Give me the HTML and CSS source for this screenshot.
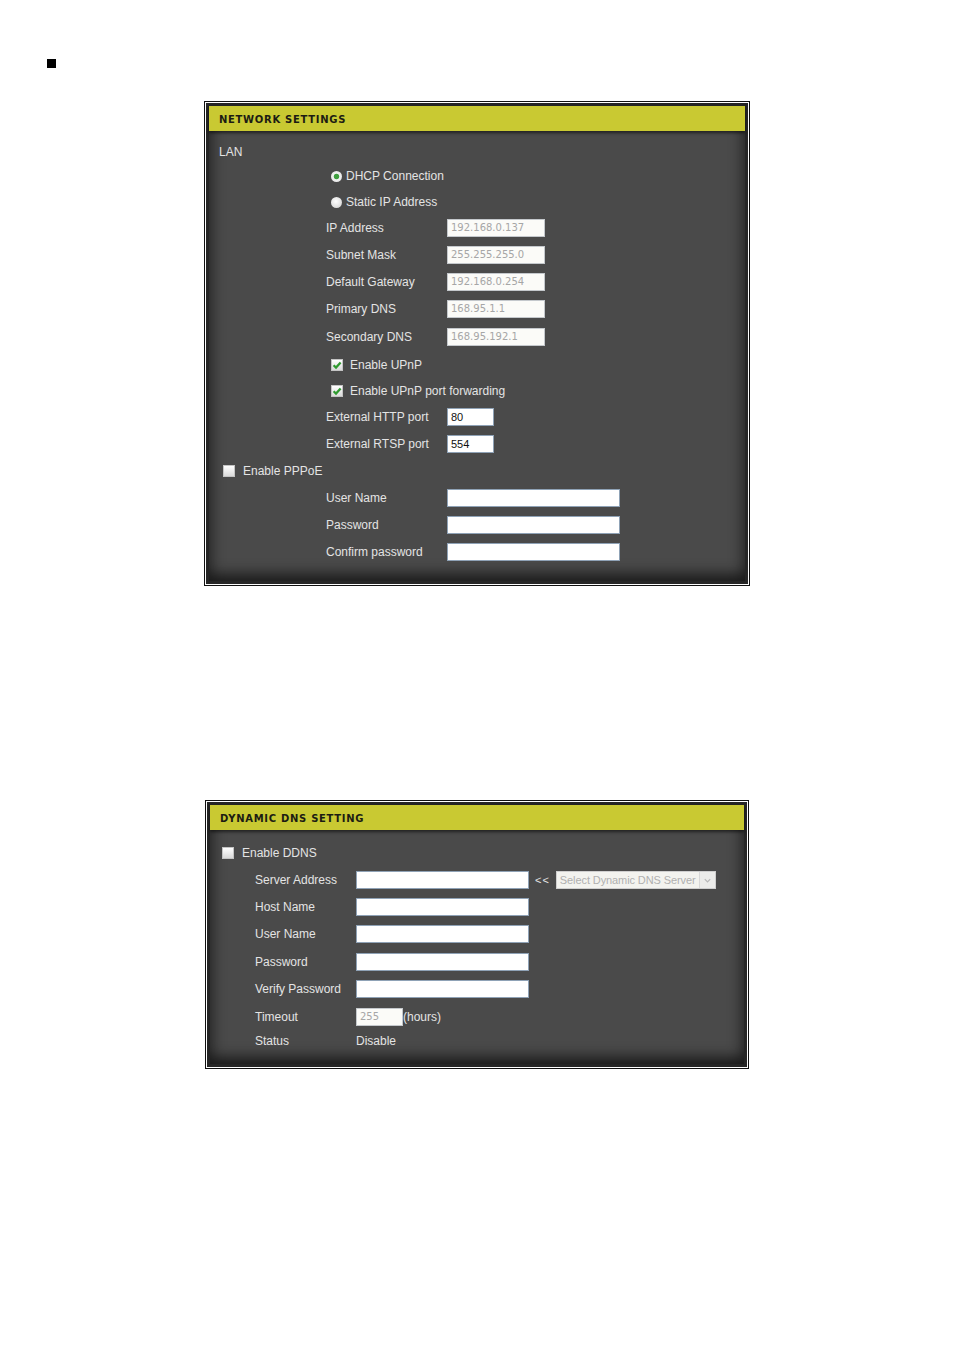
FILE: index.html
```html
<!DOCTYPE html>
<html>
<head>
<meta charset="utf-8">
<link rel="stylesheet" href="styles.css">
</head>
<body>
<div class="bullet"></div>

<div class="frame frame-net">
  <div class="panel">
    <div class="header">NETWORK SETTINGS</div>
    <div class="body body-net">
      <div class="row h22 pad-sec"><span class="txt">LAN</span></div>
      <div class="row h26 pad-opt"><span class="radio on"></span><span class="txt gap4">DHCP Connection</span></div>
      <div class="row h26 pad-opt"><span class="radio"></span><span class="txt gap4">Static IP Address</span></div>
      <div class="row h26 pad-lbl"><span class="lbl w121">IP Address</span><span class="inp ip dis">192.168.0.137</span></div>
      <div class="row h28 pad-lbl"><span class="lbl w121">Subnet Mask</span><span class="inp ip dis">255.255.255.0</span></div>
      <div class="row h26 pad-lbl"><span class="lbl w121">Default Gateway</span><span class="inp ip dis">192.168.0.254</span></div>
      <div class="row h28 pad-lbl"><span class="lbl w121">Primary DNS</span><span class="inp ip dis">168.95.1.1</span></div>
      <div class="row h28 pad-lbl"><span class="lbl w121">Secondary DNS</span><span class="inp ip dis">168.95.192.1</span></div>
      <div class="row h28 pad-opt"><span class="chk on"><svg viewBox="0 0 12 12" width="12" height="12"><path d="M2.6 6.2 L5 8.6 L9.6 3.4" fill="none" stroke="#2f9a2f" stroke-width="2.2"/></svg></span><span class="txt gap7">Enable UPnP</span></div>
      <div class="row h24 pad-opt"><span class="chk on"><svg viewBox="0 0 12 12" width="12" height="12"><path d="M2.6 6.2 L5 8.6 L9.6 3.4" fill="none" stroke="#2f9a2f" stroke-width="2.2"/></svg></span><span class="txt gap7">Enable UPnP port forwarding</span></div>
      <div class="row h28 pad-lbl"><span class="lbl w121">External HTTP port</span><span class="inp port">80</span></div>
      <div class="row h26 pad-lbl"><span class="lbl w121">External RTSP port</span><span class="inp port">554</span></div>
      <div class="row h28 pad-chk1"><span class="chk"></span><span class="txt gap8">Enable PPPoE</span></div>
      <div class="row h26 pad-lbl"><span class="lbl w121">User Name</span><span class="inp long"></span></div>
      <div class="row h28 pad-lbl"><span class="lbl w121">Password</span><span class="inp long"></span></div>
      <div class="row h26 pad-lbl"><span class="lbl w121">Confirm password</span><span class="inp long"></span></div>
    </div>
  </div>
</div>

<div class="frame frame-ddns">
  <div class="panel">
    <div class="header">DYNAMIC DNS SETTING</div>
    <div class="body body-ddns">
      <div class="row h26 pad-chk2"><span class="chk"></span><span class="txt gap8">Enable DDNS</span></div>
      <div class="row h28 pad-lbl2"><span class="lbl w101">Server Address</span><span class="inp long"></span><span class="txt arrows">&lt;&lt;</span><span class="select"><span class="sel-txt">Select Dynamic DNS Server</span><span class="sel-btn"><svg viewBox="0 0 10 10" width="9" height="9"><path d="M2 3.5 L5 6.5 L8 3.5" fill="none" stroke="#b8b8b8" stroke-width="1.4"/></svg></span></span></div>
      <div class="row h26 pad-lbl2"><span class="lbl w101">Host Name</span><span class="inp long"></span></div>
      <div class="row h28 pad-lbl2"><span class="lbl w101">User Name</span><span class="inp long"></span></div>
      <div class="row h28 pad-lbl2"><span class="lbl w101">Password</span><span class="inp long"></span></div>
      <div class="row h26 pad-lbl2"><span class="lbl w101">Verify Password</span><span class="inp long"></span></div>
      <div class="row h30 pad-lbl2"><span class="lbl w101">Timeout</span><span class="inp port dis">255</span><span class="txt">(hours)</span></div>
      <div class="row h18 pad-lbl2"><span class="lbl w101">Status</span><span class="txt">Disable</span></div>
    </div>
  </div>
</div>
</body>
</html>
```

FILE: styles.css
```css
html, body {
  margin: 0;
  padding: 0;
  background: #ffffff;
}

body {
  width: 954px;
  height: 1350px;
  font-family: "Liberation Sans", Arial, sans-serif;
  padding-top: 59px;
  box-sizing: border-box;
}

.bullet {
  width: 9px;
  height: 9px;
  background: #000;
  margin-left: 47px;
}

.frame {
  border: 1px solid #111;
  padding: 1px;
  background: #fff;
  width: 542px;
}

.frame-net {
  margin-left: 204px;
  margin-top: 33px;
}

.frame-ddns {
  margin-left: 205px;
  margin-top: 214px;
  width: 540px;
}

.panel {
  border: 3px solid #262626;
  background: #4a4a4a;
  box-shadow: inset 0 0 14px 3px rgba(0, 0, 0, 0.45), inset 0 -14px 14px -6px rgba(0, 0, 0, 0.4);
}

.header {
  height: 25px;
  background: #c9c932;
  box-shadow: 0 2px 3px rgba(0, 0, 0, 0.55);
  color: #1c1c12;
  font-family: "DejaVu Sans", Verdana, sans-serif;
  font-weight: bold;
  font-size: 10px;
  letter-spacing: 0.7px;
  line-height: 27px;
  padding-left: 10px;
}

.body-net {
  padding-top: 10px;
  padding-bottom: 16px;
}

.body-ddns {
  padding-top: 10px;
  padding-bottom: 14px;
}

.row {
  display: flex;
  align-items: center;
  box-sizing: border-box;
}

.h18 { height: 18px; }
.h22 { height: 22px; }
.h24 { height: 24px; }
.h26 { height: 26px; }
.h28 { height: 28px; }
.h30 { height: 30px; }

.pad-sec { padding-left: 10px; }
.pad-opt { padding-left: 122px; }
.pad-lbl { padding-left: 117px; }
.pad-chk1 { padding-left: 14px; }
.pad-chk2 { padding-left: 12px; }
.pad-lbl2 { padding-left: 45px; }

.txt, .lbl {
  color: #e4e4e4;
  font-size: 12px;
  white-space: nowrap;
}

.w121 { width: 121px; flex: none; }
.w101 { width: 101px; flex: none; }

.gap4 { margin-left: 4px; }
.gap7 { margin-left: 7px; }
.gap8 { margin-left: 8px; }

.radio {
  width: 11px;
  height: 11px;
  border-radius: 50%;
  background: radial-gradient(circle at 45% 40%, #ffffff 0, #e2e2e2 60%, #c8c8c8 100%);
  flex: none;
}

.radio.on {
  background: radial-gradient(circle, #3f9f3f 0, #3f9f3f 2.3px, #f2f2f2 3.2px, #dcdcdc 100%);
}

.chk {
  width: 12px;
  height: 12px;
  box-sizing: border-box;
  background: linear-gradient(#ffffff, #dadada);
  border: 1px solid #c4c4c4;
  flex: none;
  position: relative;
}

.chk svg {
  position: absolute;
  left: -1px;
  top: -1px;
}

.inp {
  box-sizing: border-box;
  height: 18px;
  background: #ffffff;
  border: 1px solid #8fa2b6;
  font-size: 11px;
  line-height: 16px;
  padding-left: 3px;
  color: #111;
  flex: none;
  white-space: nowrap;
  overflow: hidden;
}

.inp.dis {
  background: #fbfbf8;
  color: #a6a6a6;
  font-family: "DejaVu Sans", Verdana, sans-serif;
  font-size: 10px;
  border-color: #c4c8cc;
}

.ip { width: 98px; }
.port { width: 47px; }
.long { width: 173px; height: 18px; }

.arrows {
  margin-left: 6px;
  margin-right: 6px;
  font-size: 11px;
  letter-spacing: 1px;
}

.select {
  width: 160px;
  height: 18px;
  box-sizing: border-box;
  background: #f3f3ef;
  border: 1px solid #cfcfcf;
  display: flex;
  align-items: center;
  justify-content: space-between;
  flex: none;
}

.sel-txt {
  color: #b0b0b0;
  font-size: 11px;
  padding-left: 3px;
  letter-spacing: -0.1px;
  white-space: nowrap;
}

.sel-btn {
  width: 16px;
  height: 16px;
  box-sizing: border-box;
  border-left: 1px solid #d8d8d8;
  background: #ececea;
  display: flex;
  align-items: center;
  justify-content: center;
}
```
